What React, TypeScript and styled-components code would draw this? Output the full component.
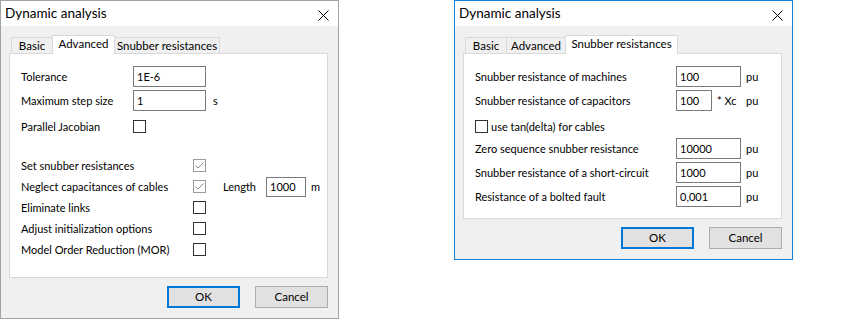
import React from "react";
import styled, { createGlobalStyle } from "styled-components";

const Global = createGlobalStyle`
  html, body { margin: 0; padding: 0; background: #ffffff; }
  body {
    font-family: Lato, "Noto Sans", sans-serif;
    font-size: 11px;
    color: #000000;
  }
  * { box-sizing: border-box; }
`;

const Page = styled.div`
  display: flex;
  align-items: flex-start;
  gap: 115px;
  width: 854px;
  height: 321px;
`;

const Window = styled.div<{ $active?: boolean; $height: number }>`
  width: 339px;
  height: ${(p) => p.$height}px;
  border: 1px solid ${(p) => (p.$active ? "#1883d7" : "#a3a3a3")};
  background: #f0f0f0;
  display: flex;
  flex-direction: column;
`;

const TitleBar = styled.div`
  height: 25px;
  flex: none;
  background: #ffffff;
  display: flex;
  align-items: center;
  justify-content: space-between;
  padding: 0 9px 0 4px;
`;

const Title = styled.span`
  font-size: 13.5px;
  line-height: 16px;
  margin-top: -1px;
`;

const CloseIcon = styled.svg`
  width: 11px;
  height: 11px;
  margin-top: 4px;
`;

const Body = styled.div`
  flex: 1;
  display: flex;
  flex-direction: column;
  padding: 9px 10px 10px 8px;
  min-height: 0;
`;

const TabStrip = styled.div`
  display: flex;
  align-items: flex-end;
  height: 19px;
  padding-left: 2px;
  margin-bottom: -1px;
  position: relative;
  z-index: 1;
`;

const Tab = styled.div<{ $selected?: boolean; $width: number; $first?: boolean }>`
  width: ${(p) => p.$width}px;
  height: ${(p) => (p.$selected ? 19 : 16)}px;
  margin-bottom: ${(p) => (p.$selected ? 0 : 1)}px;
  margin-left: ${(p) => (p.$first ? 0 : -1)}px;
  border: 1px solid #d9d9d9;
  border-bottom: none;
  background: ${(p) => (p.$selected ? "#ffffff" : "#f0f0f0")};
  position: relative;
  z-index: ${(p) => (p.$selected ? 2 : 1)};
  display: flex;
  justify-content: center;
  align-items: flex-start;
  padding-top: 1px;
  font-size: 11.5px;
  line-height: 14px;
  white-space: nowrap;
`;

const Panel = styled.div`
  flex: 1;
  background: #ffffff;
  border: 1px solid #d9d9d9;
  padding: 12px 11px 0 11px;
  display: flex;
  flex-direction: column;
`;

const Row = styled.div<{ $labelWidth: number; $top?: number }>`
  display: grid;
  grid-template-columns: ${(p) => p.$labelWidth}px auto auto auto;
  justify-content: start;
  align-items: center;
  height: 21px;
  margin-top: ${(p) => p.$top ?? 0}px;
  white-space: nowrap;
`;

const Label = styled.span`
  line-height: 16px;
`;

const TextBox = styled.div<{ $width: number; $height?: number }>`
  width: ${(p) => p.$width}px;
  height: ${(p) => p.$height ?? 21}px;
  border: 1px solid #7a7a7a;
  background: #ffffff;
  padding: 0 3px;
  display: flex;
  align-items: center;
  line-height: 16px;
`;

const Unit = styled.span<{ $gap?: number }>`
  margin-left: ${(p) => p.$gap ?? 5}px;
  line-height: 16px;
`;

const InputCell = styled.div<{ $width: number }>`
  width: ${(p) => p.$width}px;
  display: flex;
  align-items: center;
`;

const LengthGroup = styled.div`
  display: grid;
  grid-template-columns: 43px 40px auto;
  align-items: center;
  margin-left: 17px;
`;

const Box = styled.div<{ $checked?: boolean }>`
  width: 13px;
  height: 13px;
  border: 1px solid ${(p) => (p.$checked ? "#9a9a9a" : "#333333")};
  background: #ffffff;
  display: flex;
  align-items: center;
  justify-content: center;
`;

const CheckRow = styled.div<{ $top?: number }>`
  display: flex;
  align-items: center;
  gap: 3px;
  height: 21px;
  margin-top: ${(p) => p.$top ?? 0}px;
  white-space: nowrap;
`;

const Footer = styled.div`
  display: flex;
  justify-content: flex-end;
  gap: 15px;
  margin-top: 8px;
  flex: none;
`;

const Button = styled.div<{ $default?: boolean }>`
  width: 73px;
  height: 22px;
  background: #e1e1e1;
  border: ${(p) => (p.$default ? "2px solid #0078d7" : "1px solid #adadad")};
  display: flex;
  align-items: center;
  justify-content: center;
  font-size: 11.5px;
  line-height: 16px;
`;

const Check = ({ checked }: { checked?: boolean }) => (
  <Box $checked={checked}>
    {checked && (
      <svg width="11" height="11" viewBox="0 0 11 11">
        <path d="M1.5 5.5 L4 8 L9.5 2.5" fill="none" stroke="#8a8a8a" strokeWidth="1" />
      </svg>
    )}
  </Box>
);

const Close = () => (
  <CloseIcon viewBox="0 0 11 11">
    <path d="M0.5 0.5 L10.5 10.5 M10.5 0.5 L0.5 10.5" stroke="#000" strokeWidth="1" fill="none" />
  </CloseIcon>
);

type TabDef = { label: string; width: number };

const Dialog = ({
  active,
  height,
  tabs,
  selected,
  children,
}: {
  active?: boolean;
  height: number;
  tabs: TabDef[];
  selected: number;
  children: React.ReactNode;
}) => (
  <Window $active={active} $height={height}>
    <TitleBar>
      <Title>Dynamic analysis</Title>
      <Close />
    </TitleBar>
    <Body>
      <TabStrip>
        {tabs.map((t, i) => (
          <Tab key={t.label} $width={t.width} $selected={i === selected} $first={i === 0}>
            {t.label}
          </Tab>
        ))}
      </TabStrip>
      <Panel>{children}</Panel>
      <Footer>
        <Button $default>OK</Button>
        <Button>Cancel</Button>
      </Footer>
    </Body>
  </Window>
);

const advancedChecks: { label: string; checked: boolean; length?: boolean }[] = [
  { label: "Set snubber resistances", checked: true },
  { label: "Neglect capacitances of cables", checked: true, length: true },
  { label: "Eliminate links", checked: false },
  { label: "Adjust initialization options", checked: false },
  { label: "Model Order Reduction (MOR)", checked: false },
];

const snubberRows = [
  { label: "Zero sequence snubber resistance", value: "10000" },
  { label: "Snubber resistance of a short-circuit", value: "1000" },
  { label: "Resistance of a bolted fault", value: "0,001" },
];

export default function App() {
  return (
    <>
      <Global />
      <Page>
        <Dialog
          height={319}
          selected={1}
          tabs={[
            { label: "Basic", width: 42 },
            { label: "Advanced", width: 63 },
            { label: "Snubber resistances", width: 106 },
          ]}
        >
          <Row $labelWidth={112}>
            <Label>Tolerance</Label>
            <TextBox $width={73}>1E-6</TextBox>
          </Row>
          <Row $labelWidth={112} $top={3}>
            <Label>Maximum step size</Label>
            <TextBox $width={73}>1</TextBox>
            <Unit $gap={7}>s</Unit>
          </Row>
          <Row $labelWidth={112} $top={5}>
            <Label>Parallel Jacobian</Label>
            <Check />
          </Row>
          {advancedChecks.map((c, i) => (
            <Row key={c.label} $labelWidth={172} $top={i === 0 ? 18 : 0}>
              <Label>{c.label}</Label>
              <Check checked={c.checked} />
              {c.length && (
                <LengthGroup>
                  <Label>Length</Label>
                  <TextBox $width={40} $height={20}>
                    1000
                  </TextBox>
                  <Unit $gap={5}>m</Unit>
                </LengthGroup>
              )}
            </Row>
          ))}
        </Dialog>
        <Dialog
          active
          height={260}
          selected={2}
          tabs={[
            { label: "Basic", width: 42 },
            { label: "Advanced", width: 60 },
            { label: "Snubber resistances", width: 113 },
          ]}
        >
          <Row $labelWidth={201}>
            <Label>Snubber resistance of machines</Label>
            <TextBox $width={65}>100</TextBox>
            <Unit>pu</Unit>
          </Row>
          <Row $labelWidth={201} $top={3}>
            <Label>Snubber resistance of capacitors</Label>
            <InputCell $width={65}>
              <TextBox $width={36}>100</TextBox>
              <Unit>* Xc</Unit>
            </InputCell>
            <Unit>pu</Unit>
          </Row>
          <CheckRow $top={5}>
            <Check />
            <Label>use tan(delta) for cables</Label>
          </CheckRow>
          {snubberRows.map((r, i) => (
            <Row key={r.label} $labelWidth={201} $top={i === 0 ? 1 : 3}>
              <Label>{r.label}</Label>
              <TextBox $width={65}>{r.value}</TextBox>
              <Unit>pu</Unit>
            </Row>
          ))}
        </Dialog>
      </Page>
    </>
  );
}
